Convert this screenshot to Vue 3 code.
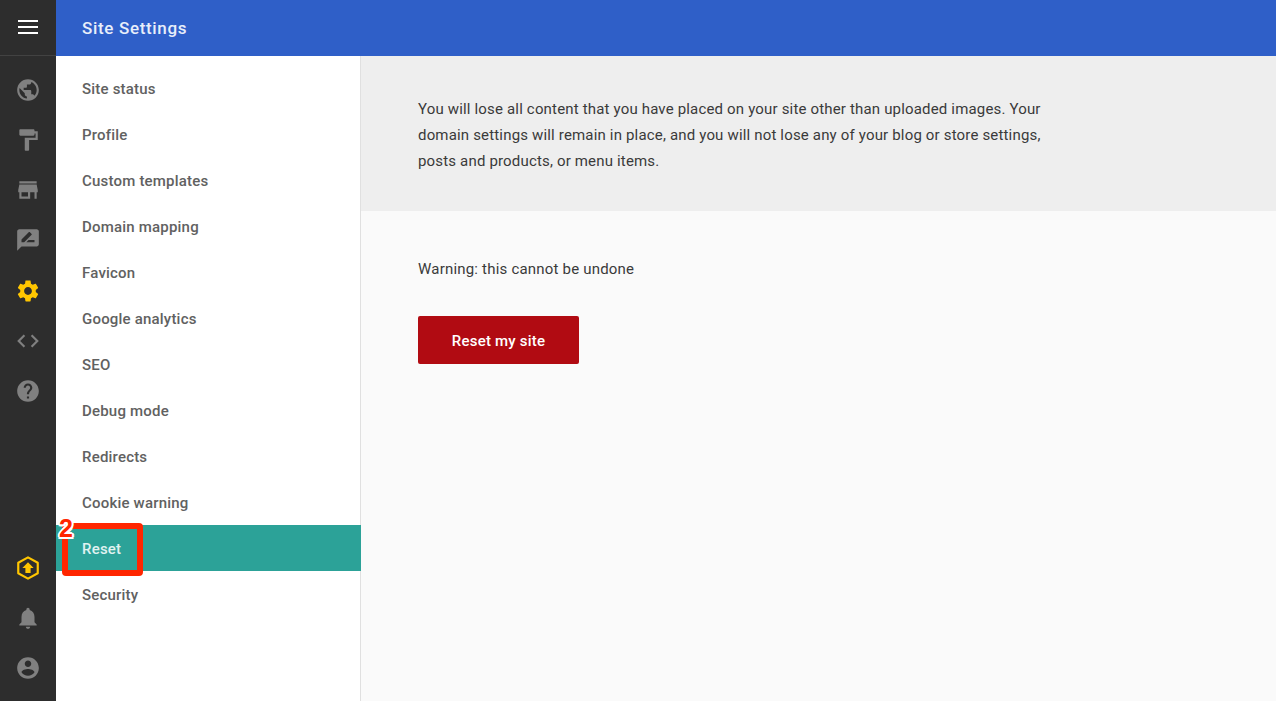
<script setup>
const topIcons = [
  { d: 'M12 2C6.48 2 2 6.48 2 12s4.48 10 10 10 10-4.48 10-10S17.52 2 12 2zm-1 17.93c-3.95-.49-7-3.85-7-7.93 0-.62.08-1.21.21-1.79L9 15v1c0 1.1.9 2 2 2v1.93zm6.9-2.54c-.26-.81-1-1.39-1.9-1.39h-1v-3c0-.55-.45-1-1-1H8v-2h2c.55 0 1-.45 1-1V7h2c1.1 0 2-.9 2-2v-.41c2.93 1.19 5 4.06 5 7.41 0 2.08-.8 3.97-2.1 5.39z' },
  { d: 'M18 4V3c0-.55-.45-1-1-1H5c-.55 0-1 .45-1 1v4c0 .55.45 1 1 1h12c.55 0 1-.45 1-1V6h1v4H9v11c0 .55.45 1 1 1h2c.55 0 1-.45 1-1v-9h8V4h-3z' },
  { d: 'M20 4H4v2h16V4zm1 10v-2l-1-5H4l-1 5v2h1v6h10v-6h4v6h2v-6h1zm-9 4H6v-4h6v4z' },
  { d: 'M20 2H4c-1.1 0-1.99.9-1.99 2L2 22l4-4h14c1.1 0 2-.9 2-2V4c0-1.1-.9-2-2-2zM6 14v-2.47l6.88-6.88c.2-.2.51-.2.71 0l1.77 1.77c.2.2.2.51 0 .71L8.47 14H6zm12 0h-7.5l2-2H18v2z' },
  { d: 'M19.14 12.94c.04-.3.06-.61.06-.94 0-.32-.02-.64-.07-.94l2.03-1.58c.18-.14.23-.41.12-.61l-1.92-3.32c-.12-.22-.37-.29-.59-.22l-2.39.96c-.5-.38-1.03-.7-1.62-.94l-.36-2.54c-.04-.24-.24-.41-.48-.41h-3.84c-.24 0-.43.17-.47.41l-.36 2.54c-.59.24-1.13.57-1.62.94l-2.39-.96c-.22-.08-.47 0-.59.22L2.74 8.87c-.12.21-.08.47.12.61l2.03 1.58c-.05.3-.09.63-.09.94s.02.64.07.94l-2.03 1.58c-.18.14-.23.41-.12.61l1.92 3.32c.12.22.37.29.59.22l2.39-.96c.5.38 1.03.7 1.62.94l.36 2.54c.05.24.24.41.48.41h3.84c.24 0 .44-.17.47-.41l.36-2.54c.59-.24 1.13-.56 1.62-.94l2.39.96c.22.08.47 0 .59-.22l1.92-3.32c.12-.22.07-.47-.12-.61l-2.01-1.58zM12 15.6c-1.98 0-3.6-1.62-3.6-3.6s1.62-3.6 3.6-3.6 3.6 1.62 3.6 3.6-1.62 3.6-3.6 3.6z', active: true },
  { d: 'M9.4 16.6L4.8 12l4.6-4.6L8 6l-6 6 6 6 1.4-1.4zm5.2 0l4.6-4.6-4.6-4.6L16 6l6 6-6 6-1.4-1.4z' },
  { d: 'M12 2C6.48 2 2 6.48 2 12s4.48 10 10 10 10-4.48 10-10S17.52 2 12 2zm1 17h-2v-2h2v2zm2.07-7.75l-.9.92C13.45 12.9 13 13.5 13 15h-2v-.5c0-1.1.45-2.1 1.17-2.83l1.24-1.26c.37-.36.59-.86.59-1.41 0-1.1-.9-2-2-2s-2 .9-2 2H8c0-2.21 1.79-4 4-4s4 1.79 4 4c0 .88-.36 1.68-.93 2.25z' }
]
const bell = 'M12 22c1.1 0 2-.9 2-2h-4c0 1.1.89 2 2 2zm6-6v-5c0-3.07-1.64-5.64-4.5-6.32V4c0-.83-.67-1.5-1.5-1.5s-1.5.67-1.5 1.5v.68C7.63 5.36 6 7.92 6 11v5l-2 2v1h16v-1l-2-2z'
const account = 'M12 2C6.48 2 2 6.48 2 12s4.48 10 10 10 10-4.48 10-10S17.52 2 12 2zm0 3c1.66 0 3 1.34 3 3s-1.34 3-3 3-3-1.34-3-3 1.34-3 3-3zm0 14.2c-2.5 0-4.71-1.28-6-3.22.03-1.99 4-3.08 6-3.08 1.99 0 5.97 1.09 6 3.08-1.29 1.94-3.5 3.22-6 3.22z'
const items = ['Site status', 'Profile', 'Custom templates', 'Domain mapping', 'Favicon', 'Google analytics', 'SEO', 'Debug mode', 'Redirects', 'Cookie warning', 'Reset', 'Security']
</script>

<template>
  <div class="app">
    <aside class="rail">
      <button class="burger" aria-label="Menu"><span></span><span></span><span></span></button>
      <div class="rail-top">
        <svg v-for="(icon, i) in topIcons" :key="i" class="icon" :class="{ active: icon.active }" viewBox="0 0 24 24"><path :d="icon.d" /></svg>
      </div>
      <div class="rail-bottom">
        <svg class="icon upgrade" viewBox="0 0 24 24">
          <path class="hex" d="M12 2.2 21 7.1v9.8L12 21.8 3 16.9V7.1z" />
          <path class="arrow" d="M12 6.6 17.2 12H14.4v4.6H9.6V12H6.8z" />
        </svg>
        <svg class="icon" viewBox="0 0 24 24"><path :d="bell" /></svg>
        <svg class="icon" viewBox="0 0 24 24"><path :d="account" /></svg>
      </div>
    </aside>
    <div class="page">
      <header class="header">Site Settings</header>
      <div class="body">
        <nav class="nav">
          <a v-for="item in items" :key="item" class="nav-item" :class="{ selected: item === 'Reset' }">
            {{ item }}
            <template v-if="item === 'Reset'">
              <span class="mark"></span>
              <span class="mark-num">2</span>
            </template>
          </a>
        </nav>
        <main class="main">
          <section class="intro">
            <p>You will lose all content that you have placed on your site other than uploaded images. Your domain settings will remain in place, and you will not lose any of your blog or store settings, posts and products, or menu items.</p>
          </section>
          <section class="action">
            <p class="warning">Warning: this cannot be undone</p>
            <button class="reset-btn">Reset my site</button>
          </section>
        </main>
      </div>
    </div>
  </div>
</template>

<style>
html, body { margin: 0; padding: 0; overflow: hidden; }
</style>

<style scoped>
.app {
  display: flex;
  width: 1276px;
  height: 701px;
  overflow: hidden;
  font-family: Roboto, "Liberation Sans", sans-serif;
}
.rail {
  width: 56px;
  flex: none;
  background: #2d2d2d;
  display: flex;
  flex-direction: column;
  align-items: center;
}
.burger {
  width: 56px;
  height: 56px;
  flex: none;
  border: 0;
  border-bottom: 1px solid #424242;
  background: transparent;
  padding: 0 0 2px;
  display: flex;
  flex-direction: column;
  align-items: center;
  justify-content: center;
  gap: 4px;
}
.burger span {
  display: block;
  width: 20px;
  height: 2px;
  background: #fff;
}
.rail-top {
  display: flex;
  flex-direction: column;
  align-items: center;
  gap: 24.3px;
  padding-top: 20.5px;
}
.rail-bottom {
  margin-top: auto;
  display: flex;
  flex-direction: column;
  align-items: center;
  gap: 24px;
  padding-bottom: 20px;
}
.icon {
  width: 26px;
  height: 26px;
  display: block;
  fill: #808080;
}
.icon.active { fill: #ffc600; }
.hex { fill: none; stroke: #ffc600; stroke-width: 2; stroke-linejoin: round; }
.upgrade .arrow { fill: #ffc600; }
.page {
  flex: 1;
  min-width: 0;
  display: flex;
  flex-direction: column;
}
.header {
  height: 56px;
  flex: none;
  background: #2f5fc8;
  color: #e8eefa;
  font-size: 17px;
  font-weight: 500;
  letter-spacing: 0.67px;
  line-height: 56px;
  padding-left: 26px;
}
.body {
  flex: 1;
  min-height: 0;
  display: flex;
}
.nav {
  width: 304px;
  flex: none;
  background: #fff;
  border-right: 1px solid #e0e0e0;
  padding-top: 9px;
}
.nav-item {
  position: relative;
  display: block;
  height: 46px;
  line-height: 48px;
  padding-left: 26px;
  font-size: 15px;
  font-weight: 500;
  letter-spacing: 0.2px;
  color: #616161;
}
.nav-item.selected {
  background: #2ca298;
  color: #e0f2f1;
  margin-right: -1px;
}
.mark {
  position: absolute;
  left: 6px;
  top: -2px;
  width: 69px;
  height: 41px;
  border: 6px solid #ff2600;
  border-radius: 4px;
}
.mark-num {
  position: absolute;
  left: 3px;
  top: -9px;
  height: 24px;
  line-height: 24px;
  font-family: "Liberation Sans", sans-serif;
  font-size: 25px;
  font-weight: 700;
  letter-spacing: 0;
  color: #ff2600;
  text-shadow: -2px 0 #fff, 2px 0 #fff, 0 -2px #fff, 0 2px #fff, -1.5px -1.5px #fff, 1.5px 1.5px #fff, 1.5px -1.5px #fff, -1.5px 1.5px #fff;
}
.main {
  flex: 1;
  min-width: 0;
  background: #fafafa;
  color: #3a3a3a;
}
.intro {
  height: 155px;
  box-sizing: border-box;
  background: #eeeeee;
  padding: 40px 57px;
}
.intro p {
  margin: 0;
  width: 640px;
  font-size: 15px;
  line-height: 26px;
  letter-spacing: 0.17px;
}
.action {
  padding: 45px 57px;
}
.warning {
  margin: 0 0 34px;
  font-size: 15px;
  line-height: 26px;
  letter-spacing: 0.2px;
}
.reset-btn {
  display: block;
  width: 161px;
  height: 48px;
  border: 0;
  border-radius: 2px;
  background: #b10b12;
  color: #fff;
  font-family: inherit;
  font-size: 15px;
  font-weight: 500;
  letter-spacing: 0.2px;
  padding: 2px 0 0;
}
</style>
